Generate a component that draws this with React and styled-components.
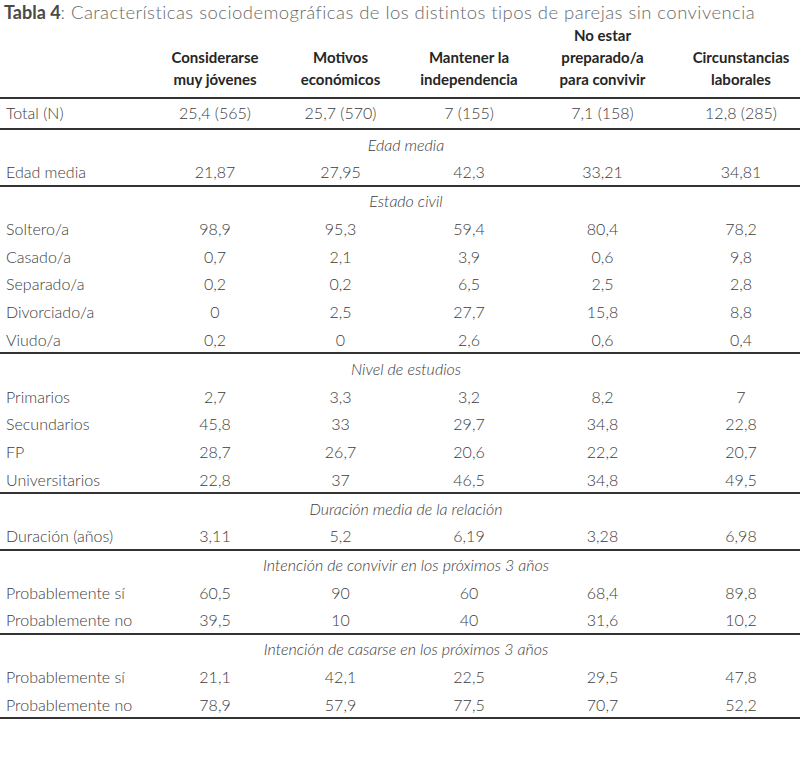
import React from "react"
import styled, { createGlobalStyle } from "styled-components"

const GlobalStyle = createGlobalStyle`
	html, body {
		margin: 0;
		padding: 0;
		background: #fff;
		overflow-x: hidden;
	}
	body {
		font-family: Lato, "Open Sans", sans-serif;
		color: #444;
	}
`

const Page = styled.div`
	width: 800px;
	overflow: hidden;
`

const Title = styled.h1`
	margin: 0;
	padding: 1px 0 0 4px;
	height: 23px;
	font-size: 18.5px;
	line-height: 22px;
	font-weight: 300;
	letter-spacing: 0.45px;
	color: #6a6a6a;
	white-space: nowrap;
	b {
		font-weight: 700;
		font-size: 18px;
		letter-spacing: 0;
		color: #4a4a4a;
	}
`

const Table = styled.table`
	width: 812px;
	table-layout: fixed;
	border-collapse: collapse;
	font-size: 16px;
	font-weight: 300;
	color: #3c3c3c;
`

const HeadCell = styled.th`
	height: 66px;
	padding: 0 0 7px;
	vertical-align: bottom;
	text-align: center;
	font-size: 15px;
	line-height: 22px;
	font-weight: 700;
	color: #262626;
	border-bottom: 2px solid #333;
`

const Row = styled.tr`
	height: ${(p) => p.$h}px;
	border-bottom: ${(p) => (p.$ruled ? "2px solid #333" : "none")};
`

const Label = styled.td`
	padding: ${(p) => (p.$last ? "4px" : "0")} 0 0 6px;
	text-align: left;
	white-space: nowrap;
	vertical-align: ${(p) => (p.$last ? "top" : "middle")};
`

const Value = styled.td`
	padding: ${(p) => (p.$last ? "4px" : "0")} 0 0;
	text-align: center;
	white-space: nowrap;
	vertical-align: ${(p) => (p.$last ? "top" : "middle")};
`

const Section = styled.td`
	height: 28px;
	padding: 0;
	text-align: center;
	font-style: italic;
	color: #3c3c3c;
`

const columns = [
	["Considerarse", "muy jóvenes"],
	["Motivos", "económicos"],
	["Mantener la", "independencia"],
	["No estar", "preparado/a", "para convivir"],
	["Circunstancias", "laborales"],
]

const widths = [152, 126, 125, 132, 135, 142]

const groups = [
	{
		title: "Edad media",
		rows: [["Edad media", "21,87", "27,95", "42,3", "33,21", "34,81"]],
	},
	{
		title: "Estado civil",
		rows: [
			["Soltero/a", "98,9", "95,3", "59,4", "80,4", "78,2"],
			["Casado/a", "0,7", "2,1", "3,9", "0,6", "9,8"],
			["Separado/a", "0,2", "0,2", "6,5", "2,5", "2,8"],
			["Divorciado/a", "0", "2,5", "27,7", "15,8", "8,8"],
			["Viudo/a", "0,2", "0", "2,6", "0,6", "0,4"],
		],
	},
	{
		title: "Nivel de estudios",
		rows: [
			["Primarios", "2,7", "3,3", "3,2", "8,2", "7"],
			["Secundarios", "45,8", "33", "29,7", "34,8", "22,8"],
			["FP", "28,7", "26,7", "20,6", "22,2", "20,7"],
			["Universitarios", "22,8", "37", "46,5", "34,8", "49,5"],
		],
	},
	{
		title: "Duración media de la relación",
		rows: [["Duración (años)", "3,11", "5,2", "6,19", "3,28", "6,98"]],
	},
	{
		title: "Intención de convivir en los próximos 3 años",
		rows: [
			["Probablemente sí", "60,5", "90", "60", "68,4", "89,8"],
			["Probablemente no", "39,5", "10", "40", "31,6", "10,2"],
		],
	},
	{
		title: "Intención de casarse en los próximos 3 años",
		rows: [
			["Probablemente sí", "21,1", "42,1", "22,5", "29,5", "47,8"],
			["Probablemente no", "78,9", "57,9", "77,5", "70,7", "52,2"],
		],
	},
]

function DataRow({ cells, last, h }) {
	return (
		<Row $h={h || (last ? 27.5 : 27.8)} $ruled={last}>
			<Label $last={last}>{cells[0]}</Label>
			{cells.slice(1).map((c, i) => (
				<Value key={i} $last={last}>
					{c}
				</Value>
			))}
		</Row>
	)
}

export default function App() {
	return (
		<Page>
			<GlobalStyle />
			<Title>
				<b>Tabla 4</b>: Características sociodemográficas de los distintos tipos de parejas sin convivencia
			</Title>
			<Table>
				<colgroup>
					{widths.map((w, i) => (
						<col key={i} style={{ width: w }} />
					))}
				</colgroup>
				<thead>
					<tr>
						<HeadCell />
						{columns.map((lines, i) => (
							<HeadCell key={i}>
								{lines.map((l, j) => (
									<div key={j}>{l}</div>
								))}
							</HeadCell>
						))}
					</tr>
				</thead>
				<tbody>
					<DataRow h={31} cells={["Total (N)", "25,4 (565)", "25,7 (570)", "7 (155)", "7,1 (158)", "12,8 (285)"]} last />
				</tbody>
				{groups.map((g) => (
					<tbody key={g.title}>
						<tr>
							<Section colSpan={6}>{g.title}</Section>
						</tr>
						{g.rows.map((r, i) => (
							<DataRow key={i} cells={r} last={i === g.rows.length - 1} />
						))}
					</tbody>
				))}
			</Table>
		</Page>
	)
}
